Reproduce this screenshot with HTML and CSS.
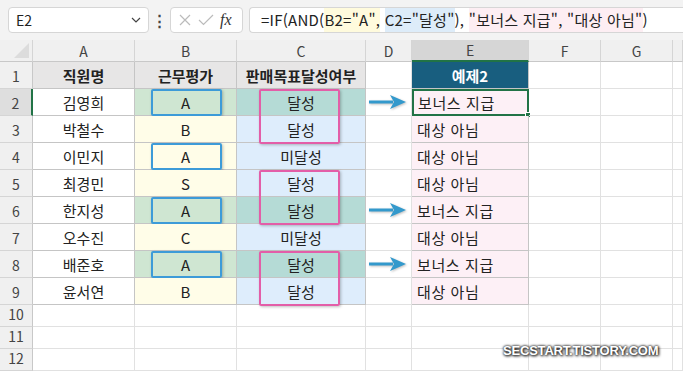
FILE: index.html
```html
<!DOCTYPE html>
<html lang="ko">
<head>
  <meta charset="UTF-8">
  <title>IF AND 예제</title>
  <link rel="stylesheet" href="styles.css">
</head>
<body>
  <div class="toolbar">
    <div class="namebox">
      <span>E2</span>
      <svg class="chev" width="10" height="6" viewBox="0 0 10 6"><path d="M1 1l4 4 4-4" fill="none" stroke="#444" stroke-width="1.2"/></svg>
    </div>
    <div class="dots">⋮</div>
    <div class="fxbox">
      <svg width="14" height="14" viewBox="0 0 14 14"><path d="M2 2l10 10M12 2L2 12" stroke="#bbb" stroke-width="1.2"/></svg>
      <svg width="16" height="14" viewBox="0 0 16 14"><path d="M1 7l4.5 4.5L15 2" fill="none" stroke="#bbb" stroke-width="1.2"/></svg>
      <span class="fx">fx</span>
    </div>
    <div class="formula">
      <span>=IF(AND(</span><span class="hl hl-y">B2="A",</span> <span class="hl hl-b">C2="달성"</span><span>),</span> <span class="hl hl-p">"보너스 지급", "대상 아님"</span><span>)</span>
    </div>
  </div>

  <div class="sheet">
    <div class="hd corner"><span class="tri"></span></div>
    <div class="hd">A</div>
    <div class="hd">B</div>
    <div class="hd">C</div>
    <div class="hd">D</div>
    <div class="hd sel">E</div>
    <div class="hd">F</div>
    <div class="hd">G</div>
    <div class="hd"></div>

    <div class="rn">1</div>
    <div class="c th">직원명</div>
    <div class="c th">근무평가</div>
    <div class="c th">판매목표달성여부</div>
    <div class="c"></div>
    <div class="c e1">예제2</div>
    <div class="c"></div><div class="c"></div><div class="c"></div>

    <div class="rn rsel">2</div>
    <div class="c a">김영희</div>
    <div class="c b hit"><span class="bbox"></span>A</div>
    <div class="c cc hit2"><span class="pbox"></span>달성</div>
    <div class="c arrow"><svg width="40" height="16" viewBox="0 0 40 16"><path d="M1 8h24" stroke="#3399cc" stroke-width="3"/><path d="M22 1l16 7-16 7 4-7z" fill="#3399cc"/></svg></div>
    <div class="c e cur">보너스 지급<span class="handle"></span></div>
    <div class="c"></div><div class="c"></div><div class="c"></div>

    <div class="rn">3</div>
    <div class="c a">박철수</div>
    <div class="c b">B</div>
    <div class="c cc">달성</div>
    <div class="c"></div>
    <div class="c e">대상 아님</div>
    <div class="c"></div><div class="c"></div><div class="c"></div>

    <div class="rn">4</div>
    <div class="c a">이민지</div>
    <div class="c b"><span class="bbox"></span>A</div>
    <div class="c cc">미달성</div>
    <div class="c"></div>
    <div class="c e">대상 아님</div>
    <div class="c"></div><div class="c"></div><div class="c"></div>

    <div class="rn">5</div>
    <div class="c a">최경민</div>
    <div class="c b">S</div>
    <div class="c cc"><span class="pbox"></span>달성</div>
    <div class="c"></div>
    <div class="c e">대상 아님</div>
    <div class="c"></div><div class="c"></div><div class="c"></div>

    <div class="rn">6</div>
    <div class="c a">한지성</div>
    <div class="c b hit"><span class="bbox"></span>A</div>
    <div class="c cc hit2">달성</div>
    <div class="c arrow"><svg width="40" height="16" viewBox="0 0 40 16"><path d="M1 8h24" stroke="#3399cc" stroke-width="3"/><path d="M22 1l16 7-16 7 4-7z" fill="#3399cc"/></svg></div>
    <div class="c e">보너스 지급</div>
    <div class="c"></div><div class="c"></div><div class="c"></div>

    <div class="rn">7</div>
    <div class="c a">오수진</div>
    <div class="c b">C</div>
    <div class="c cc">미달성</div>
    <div class="c"></div>
    <div class="c e">대상 아님</div>
    <div class="c"></div><div class="c"></div><div class="c"></div>

    <div class="rn">8</div>
    <div class="c a">배준호</div>
    <div class="c b hit"><span class="bbox"></span>A</div>
    <div class="c cc hit2"><span class="pbox"></span>달성</div>
    <div class="c arrow"><svg width="40" height="16" viewBox="0 0 40 16"><path d="M1 8h24" stroke="#3399cc" stroke-width="3"/><path d="M22 1l16 7-16 7 4-7z" fill="#3399cc"/></svg></div>
    <div class="c e">보너스 지급</div>
    <div class="c"></div><div class="c"></div><div class="c"></div>

    <div class="rn">9</div>
    <div class="c a">윤서연</div>
    <div class="c b">B</div>
    <div class="c cc">달성</div>
    <div class="c"></div>
    <div class="c e">대상 아님</div>
    <div class="c"></div><div class="c"></div><div class="c"></div>

    <div class="rn">10</div>
    <div class="c"></div><div class="c"></div><div class="c"></div><div class="c"></div><div class="c"></div><div class="c"></div><div class="c"></div><div class="c"></div>
    <div class="rn">11</div>
    <div class="c"></div><div class="c"></div><div class="c"></div><div class="c"></div><div class="c"></div><div class="c"></div><div class="c"></div><div class="c"></div>
    <div class="rn">12</div>
    <div class="c"></div><div class="c"></div><div class="c"></div><div class="c"></div><div class="c"></div><div class="c"></div><div class="c"></div><div class="c"></div>
  </div>

  <div class="watermark">SECSTART.TISTORY.COM</div>
</body>
</html>
```

FILE: styles.css
```css
* {
  box-sizing: border-box;
}
body {
  margin: 0;
  width: 683px;
  height: 371px;
  overflow: hidden;
  position: relative;
  background: #fff;
  font-family: "Noto Sans CJK KR", "Noto Sans", sans-serif;
  color: #222;
}
.toolbar {
  height: 40px;
  background: #f3f3f3;
  display: flex;
  align-items: flex-start;
  padding: 7px 0 0 8px;
}
.namebox {
  width: 141px;
  height: 26px;
  background: #fff;
  border: 1px solid #d6d6d6;
  border-radius: 4px;
  display: flex;
  align-items: center;
  justify-content: space-between;
  padding: 0 7px;
  font-size: 14px;
}
.dots {
  width: 21px;
  text-align: center;
  font-size: 15px;
  line-height: 26px;
  font-weight: bold;
  color: #444;
}
.fxbox {
  width: 73px;
  height: 26px;
  background: #fff;
  border: 1px solid #d6d6d6;
  border-radius: 4px;
  display: flex;
  align-items: center;
  gap: 6px;
  padding-left: 7px;
}
.fx {
  font-family: "Liberation Serif", serif;
  font-style: italic;
  font-size: 16px;
  color: #333;
}
.formula {
  margin-left: 6px;
  flex: 1;
  height: 26px;
  background: #fff;
  border: 1px solid #d6d6d6;
  border-right: none;
  border-radius: 4px 0 0 4px;
  padding-left: 11px;
  font-size: 15px;
  letter-spacing: 0.25px;
  line-height: 24px;
  white-space: nowrap;
  overflow: hidden;
  color: #222;
}
.hl {
  display: inline-block;
  height: 24px;
}
.hl-y { background: #fffbdd; }
.hl-b { background: #ddecf9; }
.hl-p { background: #fdeef3; }

.sheet {
  display: grid;
  grid-template-columns: 33px 102px 102px 129px 46px 117px 72px 72px 10px;
  grid-template-rows: 22px repeat(9, 27px) repeat(3, 22px);
}
.hd {
  background: #f0f0f0;
  border-right: 1px solid #d5d5d5;
  border-bottom: 1px solid #c8c8c8;
  font-size: 14px;
  color: #444;
  display: flex;
  align-items: center;
  justify-content: center;
}
.hd.sel {
  background: #d6d6d6;
  border-bottom: 2px solid #217346;
}
.corner {
  justify-content: flex-end;
  align-items: flex-end;
  padding: 0 3px 3px 0;
}
.tri {
  width: 0;
  height: 0;
  border-left: 15px solid transparent;
  border-bottom: 15px solid #dcdcdc;
}
.rn {
  background: #f0f0f0;
  border-right: 1px solid #c8c8c8;
  border-bottom: 1px solid #d5d5d5;
  font-size: 14px;
  color: #444;
  display: flex;
  align-items: flex-end;
  justify-content: center;
  padding-bottom: 2px;
}
.rn.rsel {
  background: #dedede;
  border-right: 2px solid #217346;
}
.c {
  position: relative;
  border-right: 1px solid #e1e1e1;
  border-bottom: 1px solid #e1e1e1;
  font-size: 15px;
  display: flex;
  align-items: center;
  justify-content: center;
}
.th {
  background: #e7e6e6;
  font-weight: bold;
  border-color: #c5c5c5;
}
.a {
  background: #fff;
  border-color: #c5c5c5;
}
.b {
  background: #fffde8;
  border-color: #c5c5c5;
}
.cc {
  background: #deedfc;
  border-color: #c5c5c5;
}
.b.hit {
  background: #cfe6d2;
}
.cc.hit2 {
  background: #b5dbd6;
}
.e1 {
  background: #185e7f;
  color: #fff;
  font-weight: bold;
  border-color: #c5c5c5;
}
.e {
  background: #fdf0f6;
  border-color: #c5c5c5;
  justify-content: flex-start;
  padding-left: 5px;
  letter-spacing: 0.6px;
}
.e.cur {
  border: 2px solid #217346;
  padding-left: 4px;
}
.handle {
  position: absolute;
  right: -4px;
  bottom: -4px;
  width: 6px;
  height: 6px;
  background: #217346;
  border: 1px solid #fff;
}
.arrow {
  justify-content: flex-start;
  padding-left: 2px;
}
.arrow svg {
  filter: drop-shadow(1px 1px 1px rgba(0, 0, 0, 0.25));
}
.bbox {
  position: absolute;
  left: 16px;
  right: 14px;
  top: 0;
  bottom: -1px;
  border: 2.5px solid #3d9bd8;
  border-radius: 2px;
  box-shadow: 1px 1px 3px rgba(0, 0, 0, 0.25);
}
.pbox {
  position: absolute;
  left: 22px;
  right: 25px;
  top: 0;
  height: 55px;
  border: 2.5px solid #e35ea8;
  border-radius: 2px;
  box-shadow: 1px 1px 3px rgba(0, 0, 0, 0.25);
  z-index: 1;
}
.watermark {
  position: absolute;
  left: 503px;
  top: 343px;
  font-family: "Liberation Sans", sans-serif;
  font-weight: bold;
  font-size: 13px;
  letter-spacing: -0.2px;
  color: #fff;
  text-shadow: 0 0 2px #333, 0 0 3px #333, 1px 1px 3px #000;
}
```
